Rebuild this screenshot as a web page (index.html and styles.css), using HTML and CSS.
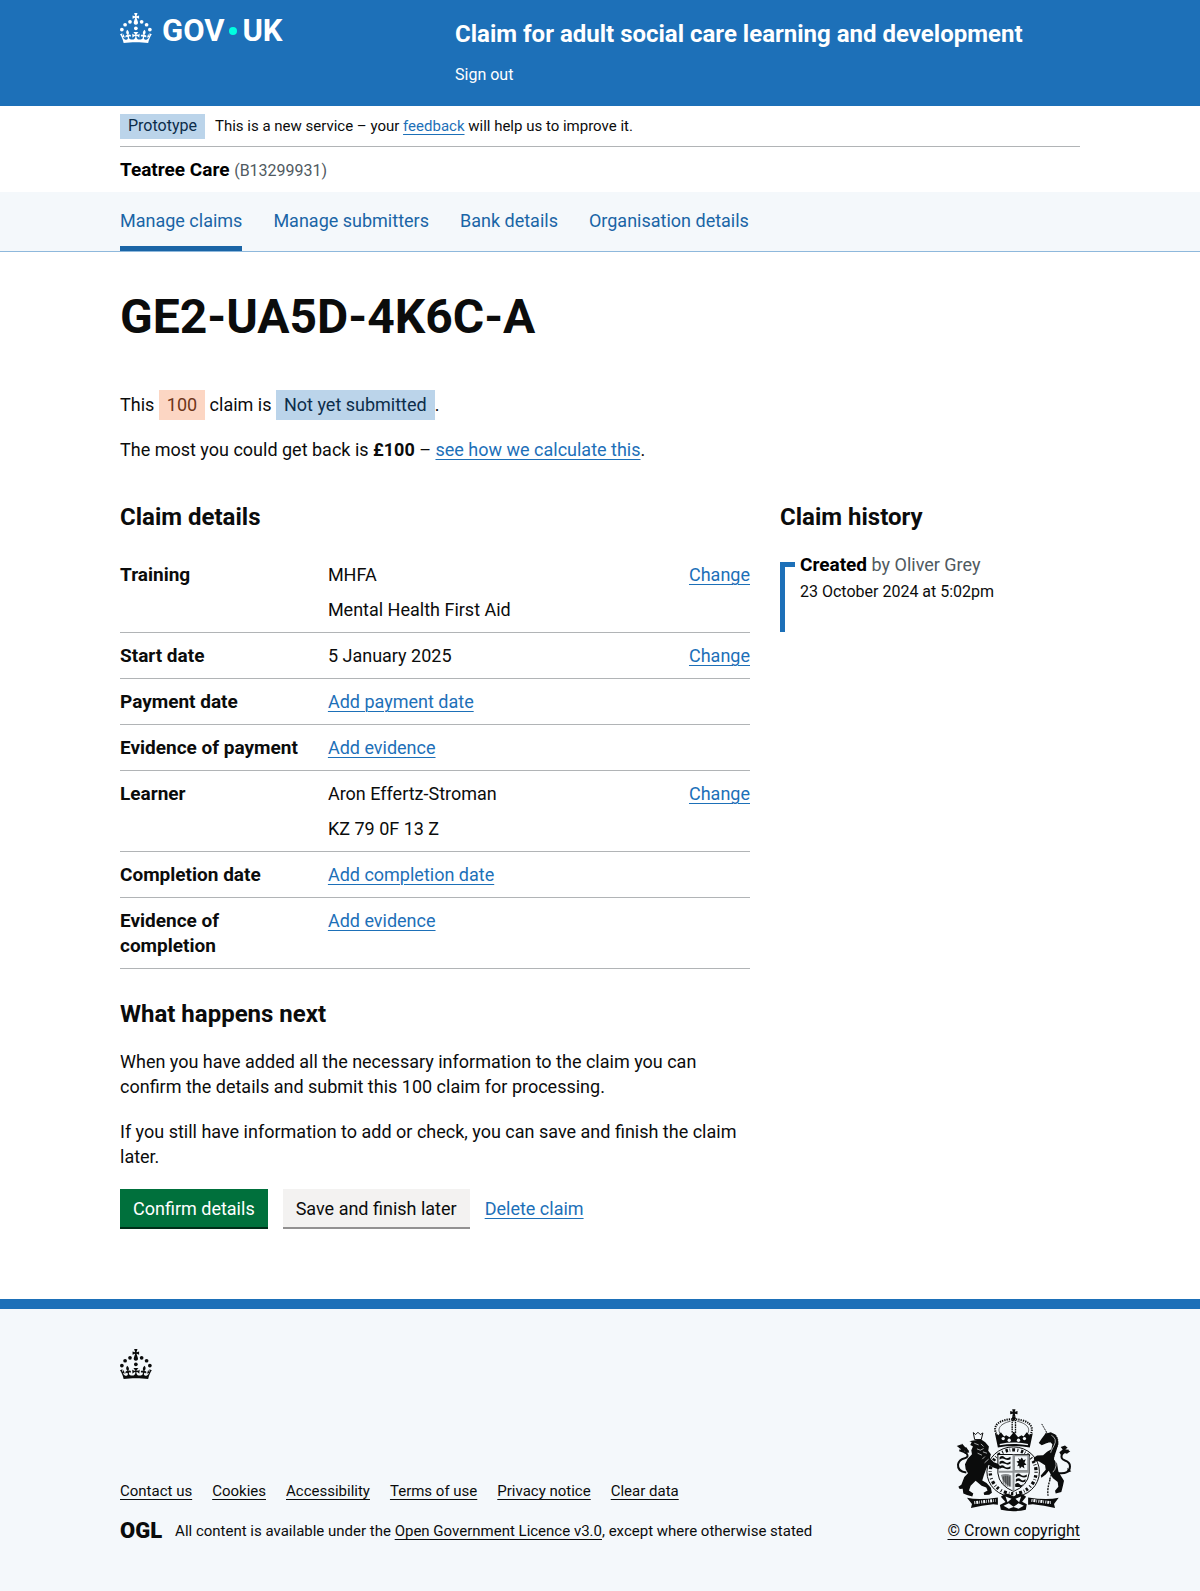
FILE: index.html
```html
<!DOCTYPE html>
<html lang="en">
<head>
  <meta charset="utf-8">
  <meta name="viewport" content="width=device-width, initial-scale=1">
  <title>GE2-UA5D-4K6C-A – Claim for adult social care learning and development</title>
  <link rel="stylesheet" href="styles.css">
</head>
<body>
  <svg class="sprite" aria-hidden="true">
    <symbol id="crown" viewBox="0 0 64 60">
      <circle cx="20" cy="17.6" r="3.7"/>
      <circle cx="10.2" cy="23.5" r="3.7"/>
      <circle cx="3.7" cy="33.2" r="3.7"/>
      <circle cx="31.7" cy="30.6" r="3.7"/>
      <circle cx="43.3" cy="17.6" r="3.7"/>
      <circle cx="53.2" cy="23.5" r="3.7"/>
      <circle cx="59.7" cy="33.2" r="3.7"/>
      <path d="M33.1,9.8c.2-.1.3-.3.5-.5l4.6,2.4v-6.8l-4.6,1.5c-.1-.2-.3-.3-.5-.5l1.9-5.9h-6.7l1.9,5.9c-.2.1-.3.3-.5.5l-4.6-1.5v6.8l4.6-2.4c.1.2.3.3.5.5l-2.6,8c-.9,2.8,1.2,5.7,4.1,5.7h0c3,0,5.1-2.9,4.1-5.7l-2.6-8ZM37,37.9s-3.4,3.8-4.1,6.1c2.2,0,4.2-.5,6.4-2.8l-.7,8.5c-2-2.8-4.4-4.1-5.7-3.8.1,3.1.5,6.7,5.8,7.2,3.7.3,6.7-1.5,7-3.8.4-2.6-2-4.3-3.7-1.6-1.4-4.5,2.4-6.1,4.9-3.2-1.9-4.5-1.8-7.7,2.4-10.9,3,4,2.6,7.3-1.2,11.1,2.4-1.3,6.2,0,4,4.6-1.2-2.8-3.7-2.2-4.2.2-.3,1.7.7,3.7,3,4.2,1.9.3,4.7-.9,7-5.9-1.3,0-2.4.7-3.9,1.7l2.4-8c.6,2.3,1.4,3.7,2.2,4.5.6-1.6.5-2.8,0-5.3l5,1.8c-2.6,3.6-5.2,8.7-7.3,17.5-7.4-1.1-15.7-1.7-24.5-1.7h0c-8.8,0-17.1.6-24.5,1.7-2.1-8.9-4.7-13.9-7.3-17.5l5-1.8c-.5,2.5-.6,3.7,0,5.3.8-.8,1.6-2.3,2.2-4.5l2.4,8c-1.5-1-2.6-1.7-3.9-1.7,2.3,5,5.2,6.2,7,5.9,2.3-.4,3.3-2.4,3-4.2-.5-2.4-3-3.1-4.2-.2-2.2-4.6,1.6-6,4-4.6-3.7-3.7-4.2-7.1-1.2-11.1,4.2,3.2,4.3,6.4,2.4,10.9,2.5-2.8,6.3-1.3,4.9,3.2-1.8-2.7-4.1-1-3.7,1.6.3,2.3,3.3,4.1,7,3.8,5.4-.5,5.7-4.2,5.8-7.2-1.3-.2-3.7,1-5.7,3.8l-.7-8.5c2.2,2.3,4.2,2.7,6.4,2.8-.7-2.3-4.1-6.1-4.1-6.1h10.6,0Z"/>
    </symbol>
  </svg>

  <header class="header">
    <div class="container header-grid">
      <a class="logo" href="#" aria-label="GOV.UK">
        <svg class="crown" aria-hidden="true"><use href="#crown"/></svg>
        <span class="wordmark">GOV<i class="dot"></i>UK</span>
      </a>
      <div class="header-content">
        <a class="service-name" href="#">Claim for adult social care learning and development</a>
        <a class="sign-out" href="#">Sign out</a>
      </div>
    </div>
  </header>

  <div class="container">
    <div class="phase-banner">
      <strong class="phase-tag">Prototype</strong>
      <span>This is a new service – your <a href="#">feedback</a> will help us to improve it.</span>
    </div>
    <p class="organisation"><strong>Teatree Care</strong> <span class="organisation-code">(B13299931)</span></p>
  </div>

  <nav class="nav" aria-label="Service">
    <ul class="container nav-list">
      <li><a class="nav-link nav-link-current" href="#" aria-current="page">Manage claims</a></li>
      <li><a class="nav-link" href="#">Manage submitters</a></li>
      <li><a class="nav-link" href="#">Bank details</a></li>
      <li><a class="nav-link" href="#">Organisation details</a></li>
    </ul>
  </nav>

  <main class="container main">
    <h1>GE2-UA5D-4K6C-A</h1>
    <p>This <strong class="tag tag-orange">100</strong> claim is <strong class="tag">Not yet submitted</strong>.</p>
    <p>The most you could get back is <b>£100</b> – <a href="#">see how we calculate this</a>.</p>

    <div class="columns">
      <div>
        <h2>Claim details</h2>
        <dl class="summary">
          <div class="summary-row">
            <dt>Training</dt>
            <dd><p>MHFA</p><p>Mental Health First Aid</p></dd>
            <dd><a href="#">Change</a></dd>
          </div>
          <div class="summary-row">
            <dt>Start date</dt>
            <dd>5 January 2025</dd>
            <dd><a href="#">Change</a></dd>
          </div>
          <div class="summary-row">
            <dt>Payment date</dt>
            <dd><a href="#">Add payment date</a></dd>
          </div>
          <div class="summary-row">
            <dt>Evidence of payment</dt>
            <dd><a href="#">Add evidence</a></dd>
          </div>
          <div class="summary-row">
            <dt>Learner</dt>
            <dd><p>Aron Effertz-Stroman</p><p>KZ 79 0F 13 Z</p></dd>
            <dd><a href="#">Change</a></dd>
          </div>
          <div class="summary-row">
            <dt>Completion date</dt>
            <dd><a href="#">Add completion date</a></dd>
          </div>
          <div class="summary-row">
            <dt>Evidence of completion</dt>
            <dd><a href="#">Add evidence</a></dd>
          </div>
        </dl>

        <h2>What happens next</h2>
        <p>When you have added all the necessary information to the claim you can confirm the details and submit this 100 claim for processing.</p>
        <p>If you still have information to add or check, you can save and finish the claim later.</p>
        <div class="actions">
          <button class="button" type="button">Confirm details</button>
          <button class="button button-secondary" type="button">Save and finish later</button>
          <a href="#">Delete claim</a>
        </div>
      </div>

      <aside>
        <h2>Claim history</h2>
        <ol class="timeline">
          <li class="timeline-item">
            <div class="timeline-title"><strong>Created</strong> <span>by Oliver Grey</span></div>
            <time datetime="2024-10-23T17:02">23 October 2024 at 5:02pm</time>
          </li>
        </ol>
      </aside>
    </div>
  </main>

  <footer class="footer">
    <div class="container">
      <svg class="crown" aria-hidden="true"><use href="#crown"/></svg>
      <div class="footer-meta">
        <div>
          <ul class="footer-links">
            <li><a href="#">Contact us</a></li>
            <li><a href="#">Cookies</a></li>
            <li><a href="#">Accessibility</a></li>
            <li><a href="#">Terms of use</a></li>
            <li><a href="#">Privacy notice</a></li>
            <li><a href="#">Clear data</a></li>
          </ul>
          <div class="licence">
            <span class="ogl">OGL</span>
            <span>All content is available under the <a href="#">Open Government Licence v3.0</a>, except where otherwise stated</span>
          </div>
        </div>
        <a class="copyright" href="#">
          <svg class="arms" viewBox="50 25 352 310" aria-hidden="true">
            <!-- royal crown -->
            <path d="M222 26h10l-2 7 8-2v10l-8-2 2 9h-10l2-9-8 2V31l8 2z"/>
            <circle cx="227" cy="53" r="6"/>
            <path d="M178 106C155 72 190 55 225 56c36-1 71 16 50 50" fill="none" stroke="currentColor" stroke-width="6" stroke-dasharray="4 3"/>
            <path d="M187 101C172 80 196 66 217 62M267 101c15-21-9-35-30-39" fill="none" stroke="currentColor" stroke-width="2"/>
            <path d="M222 60h10v36h-10z" fill="none" stroke="currentColor" stroke-width="4" stroke-dasharray="5 2"/>
            <path d="M170 98l10 6 8-9 10 13 6-4 10 6 13-16 13 16 10-6 6 4 10-13 8 9 10-6-9 43q-48-9-96 0z"/>
            <g class="arms-light">
              <circle cx="195" cy="114" r="5"/><circle cx="213" cy="119" r="5"/><circle cx="241" cy="119" r="5"/><circle cx="259" cy="114" r="5"/>
              <path d="M184 130q43-9 86 0l-1 4q-42-8-84 0z"/>
            </g>
            <!-- garter and quartered shield -->
            <ellipse cx="225" cy="214" rx="79" ry="75" fill="none" stroke="currentColor" stroke-width="3"/>
            <ellipse cx="225" cy="214" rx="69" ry="66" fill="none" stroke="currentColor" stroke-width="10" stroke-dasharray="3 8 7 5 2 6 9 7"/>
            <path d="M179 162h94v56q-4 38-47 55-43-17-47-55z" class="arms-light" stroke="currentColor" stroke-width="3"/>
            <path d="M228 165h42v46h-42z" fill="none" stroke="#929699" stroke-width="5"/>
            <path d="M226 162v110M179 214h94" stroke="#929699" stroke-width="6"/>
            <path d="M184 170q8-7 15 0t18-1v7q-8 5-17 0t-16 2zM184 184q8-7 15 0t18-1v7q-8 5-17 0t-16 2zM184 198q8-7 15 0t18-1v7q-8 5-17 0t-16 2zM233 223q8-7 15 0t18-1v7q-8 5-17 0t-16 2zM233 237q8-7 15 0t14-1v7q-8 5-15 0t-14 2zM231 251q8-7 13 0t11-1l-5 9q-8 2-19 0z"/>
            <path d="M240 172l6 6 5-7 5 8 7-3-4 10 6 7-8 1 2 10-8-6-6 7-2-9-6 1 4-8-6-6 8-2z"/>
            <path d="M188 224q15-7 31 1v35q-25-9-31-36z" fill="#85898c"/>
            <path d="M195 228v24M201 226v30M207 226v33M213 228v31" stroke="currentColor" stroke-width="2"/>
            <!-- lion -->
            <path d="M105 96l7 6 7-7 7 7 8-5-5 20h-20z" fill="none" stroke="currentColor" stroke-width="3"/>
            <path d="M105 120l24-3 12 8 11 13-2 13 8 10-3 12 12 12 12 5 8 8-6 8-14-4-17-9-6 12-7 19-5 16 13 8 13 14 3 15-8 6-15 1-2-7 12-7-4-9-14-5-18-15-15 15-5 14 13 9-3 9-16-4-11-5-2-14-9 1-4-7 9-6 9-23 11-12-7-12-2-15 8-16 13-14-2-12 5-11-8-5 4-9-7-2z"/>
            <path d="M108 128l13 5M116 145l10 4 10-5M118 158l13 6M128 130l8 8M134 154l12 4M140 168l-8 8M151 176l-12 11" class="arms-mark"/>
            <path d="M84 216q-27-3-25-24 3-15 20-19 14-4 6-14-9-7-22-10M62 139l10 5 1-8 7 8-10 10M78 158l12-9" fill="none" stroke="currentColor" stroke-width="6"/>
            <path d="M55 136l15-5 3 9 12 1 8 15-7 1-10-8-7 6-2-11z"/>
            <!-- unicorn -->
            <path d="M311 70l18 31" stroke="currentColor" stroke-width="3" stroke-dasharray="4 2"/>
            <path d="M325 99l13-4 14 7 7 12 2 16-5 17-6 18-2 12 9 12 4 23 8 15 9 14-3 14-5 20-17 4-2-8 10-12-2-14-15-12-12-22-9 11-13 10-2-7 15-17-2-14-19-12-13 1-2-11 10-7 18-1 12-10 13-8 3-15-6-6-12 3-14 6-9-7 8-12 9-12 7-11z"/>
            <path d="M340 104q19 11 8 31t-10 22M331 127l10 5M349 170q13 28-6 47" class="arms-mark"/>
            <path d="M352 103q10 12 7 28t-18 31" fill="none" stroke="currentColor" stroke-width="3" stroke-dasharray="4 3"/>
            <path d="M361 218q34 4 35-20 0-13-15-18-16-6-8-20 7-9 19-10" fill="none" stroke="currentColor" stroke-width="6"/>
            <path d="M368 139l13-4 8 7-7 4 15 6-10 8-12-4-6 8-5-9 10-8zM388 202l12 10-10 4z"/>
            <path d="M336 237q-9 28-6 49M343 214l-8 23" fill="none" stroke="currentColor" stroke-width="4" stroke-dasharray="6 3"/>
            <!-- ribbon and compartment -->
            <path d="M86 292q36 8 93-1v22l-14-1q-34 4-67 11l3-12z"/>
            <path d="M362 292q-36 8-92-1v22l14-1q34 4 67 11l-3-12z"/>
            <path d="M108 307l64-7M280 300l62 7" stroke="#f4f8fb" stroke-width="9" stroke-dasharray="3 3 6 3 2 4"/>
            <path d="M188 289q18-18 38 0 19-18 38 0l-12 15 14 8-3 16q-38 9-75 0l-3-14 17-9z"/>
            <path d="M202 288l18 7-12 11zM249 288l-17 7 11 11zM196 316l16-7 14 10 15-10 16 7-16 9-15-5-14 5z" class="arms-light"/>
          </svg>
          <span>© Crown copyright</span>
        </a>
      </div>
    </div>
  </footer>
</body>
</html>
```

FILE: styles.css
```css
*,
*::before {
  box-sizing: border-box;
}

body {
  margin: 0;
  background: #fff;
  color: #0b0c0c;
  font-family: Roboto, "Liberation Sans", sans-serif;
  font-size: 18px;
  line-height: 25px;
}

p,
ul,
ol,
dl,
dd,
h1,
h2 {
  margin: 0;
}

ul,
ol {
  padding: 0;
  list-style: none;
}

a {
  color: #1d70b8;
  text-decoration-thickness: 1px;
  text-underline-offset: 3px;
}

.sprite {
  display: none;
}

.container {
  max-width: 960px;
  margin: 0 auto;
}

/* Header */

.header {
  padding-bottom: 21px;
  background: #1d70b8;
}

.header-grid {
  display: grid;
  grid-template-columns: 1fr 2fr;
  align-items: start;
}

.header a {
  color: #fff;
  text-decoration: none;
}

.crown {
  display: block;
  width: 32px;
  height: 30px;
  fill: currentColor;
}

.logo {
  display: flex;
  align-items: flex-end;
  gap: 10px;
  padding-top: 13px;
}

.wordmark {
  display: flex;
  align-items: center;
  font-size: 31px;
  font-weight: 700;
  line-height: 24px;
}

.dot {
  width: 8px;
  height: 8px;
  margin: 0 5px;
  border-radius: 50%;
  background: #00ffe0;
}

.header-content {
  display: flex;
  flex-direction: column;
  align-items: flex-start;
  gap: 16px;
  padding: 19px 0 0 15px;
}

.service-name {
  font-size: 24px;
  font-weight: 700;
  line-height: 30px;
}

.sign-out {
  font-size: 16px;
  line-height: 20px;
}

/* Phase banner and organisation */

.phase-banner {
  display: flex;
  align-items: center;
  gap: 10px;
  height: 41px;
  border-bottom: 1px solid #b1b4b6;
  font-size: 15px;
  line-height: 20px;
}

.phase-tag {
  padding: 2px 8px 3px;
  background: #bbd4ea;
  color: #0c2d4a;
  font-size: 16px;
  font-weight: 400;
}

.organisation {
  padding: 10px 0;
  color: #000;
  font-size: 19px;
}

.organisation-code {
  color: #505a5f;
  font-size: 16px;
  line-height: 1;
}

/* Navigation */

.nav {
  border-bottom: 1px solid #8eb8dc;
  background: #f4f8fb;
}

.nav-list {
  display: flex;
  gap: 31px;
}

.nav-link {
  display: block;
  padding: 16px 0 13px;
  border-bottom: 5px solid transparent;
  color: #1a65a6;
  text-decoration: none;
}

.nav-link-current {
  border-bottom-color: #1a65a6;
}

/* Main content */

.main {
  padding: 40px 0 70px;
}

h1 {
  margin-bottom: 50px;
  font-size: 48px;
  line-height: 50px;
}

h2 {
  margin-bottom: 20px;
  font-size: 24px;
  line-height: 30px;
}

.main p {
  margin-bottom: 20px;
}

.tag {
  display: inline-block;
  margin: -2px 0 -3px;
  padding: 2px 8px 3px;
  background: #bbd4ea;
  color: #0c2d4a;
  font-weight: 400;
}

.tag-orange {
  background: #fcd6c3;
  color: #6e3619;
}

.columns {
  display: grid;
  grid-template-columns: 21fr 10fr;
  gap: 30px;
  padding-top: 20px;
}

.summary {
  margin-bottom: 30px;
}

.summary-row {
  display: grid;
  grid-template-columns: 33% 1fr auto;
  padding: 10px 0;
  border-bottom: 1px solid #b1b4b6;
}

.summary dt {
  padding-right: 20px;
  font-size: 19px;
  font-weight: 700;
}

.summary p {
  margin-bottom: 10px;
}

.summary p:last-child {
  margin-bottom: 0;
}

.actions {
  display: flex;
  align-items: baseline;
  gap: 15px;
}

.button {
  padding: 8px 13px 7px;
  border: 0;
  border-bottom: 2px solid #002d18;
  background: #00703c;
  color: #fff;
  font: inherit;
  line-height: 23px;
}

.button-secondary {
  border-bottom-color: #929191;
  background: #f3f2f1;
  color: #0b0c0c;
}

/* Claim history */

.timeline-item {
  position: relative;
  padding: 0 0 30px 20px;
}

.timeline-item::before {
  content: "";
  position: absolute;
  top: 10px;
  bottom: 0;
  left: 0;
  width: 15px;
  background:
    linear-gradient(#1d70b8, #1d70b8) 0 0 / 15px 5px no-repeat,
    linear-gradient(#1d70b8, #1d70b8) 0 0 / 5px 100% no-repeat;
}

.timeline-title {
  margin-bottom: 5px;
  color: #000;
}

.timeline-title strong {
  font-size: 19px;
  line-height: 1;
}

.timeline-title span {
  color: #505a5f;
}

.timeline time {
  display: block;
  font-size: 16px;
  line-height: 20px;
}

/* Footer */

.footer {
  padding: 40px 0 50px;
  border-top: 10px solid #1d70b8;
  background: #f4f8fb;
  font-size: 15px;
  line-height: 20px;
}

.footer a {
  color: inherit;
}

.footer-meta {
  display: flex;
  align-items: flex-end;
  justify-content: space-between;
  gap: 30px;
  padding-top: 30px;
}

.footer-links {
  display: flex;
  flex-wrap: wrap;
  gap: 20px;
  margin-bottom: 20px;
}

.licence {
  display: flex;
  align-items: center;
  gap: 13px;
}

.ogl {
  font-size: 22px;
  font-weight: 900;
}

.copyright {
  display: flex;
  flex-direction: column;
  align-items: center;
  gap: 9px;
  font-size: 16px;
}

.arms {
  width: 117px;
  height: 103px;
  fill: currentColor;
}

.arms-light {
  fill: #f4f8fb;
}

.arms-mark {
  fill: none;
  stroke: #f4f8fb;
  stroke-width: 2px;
}
```
